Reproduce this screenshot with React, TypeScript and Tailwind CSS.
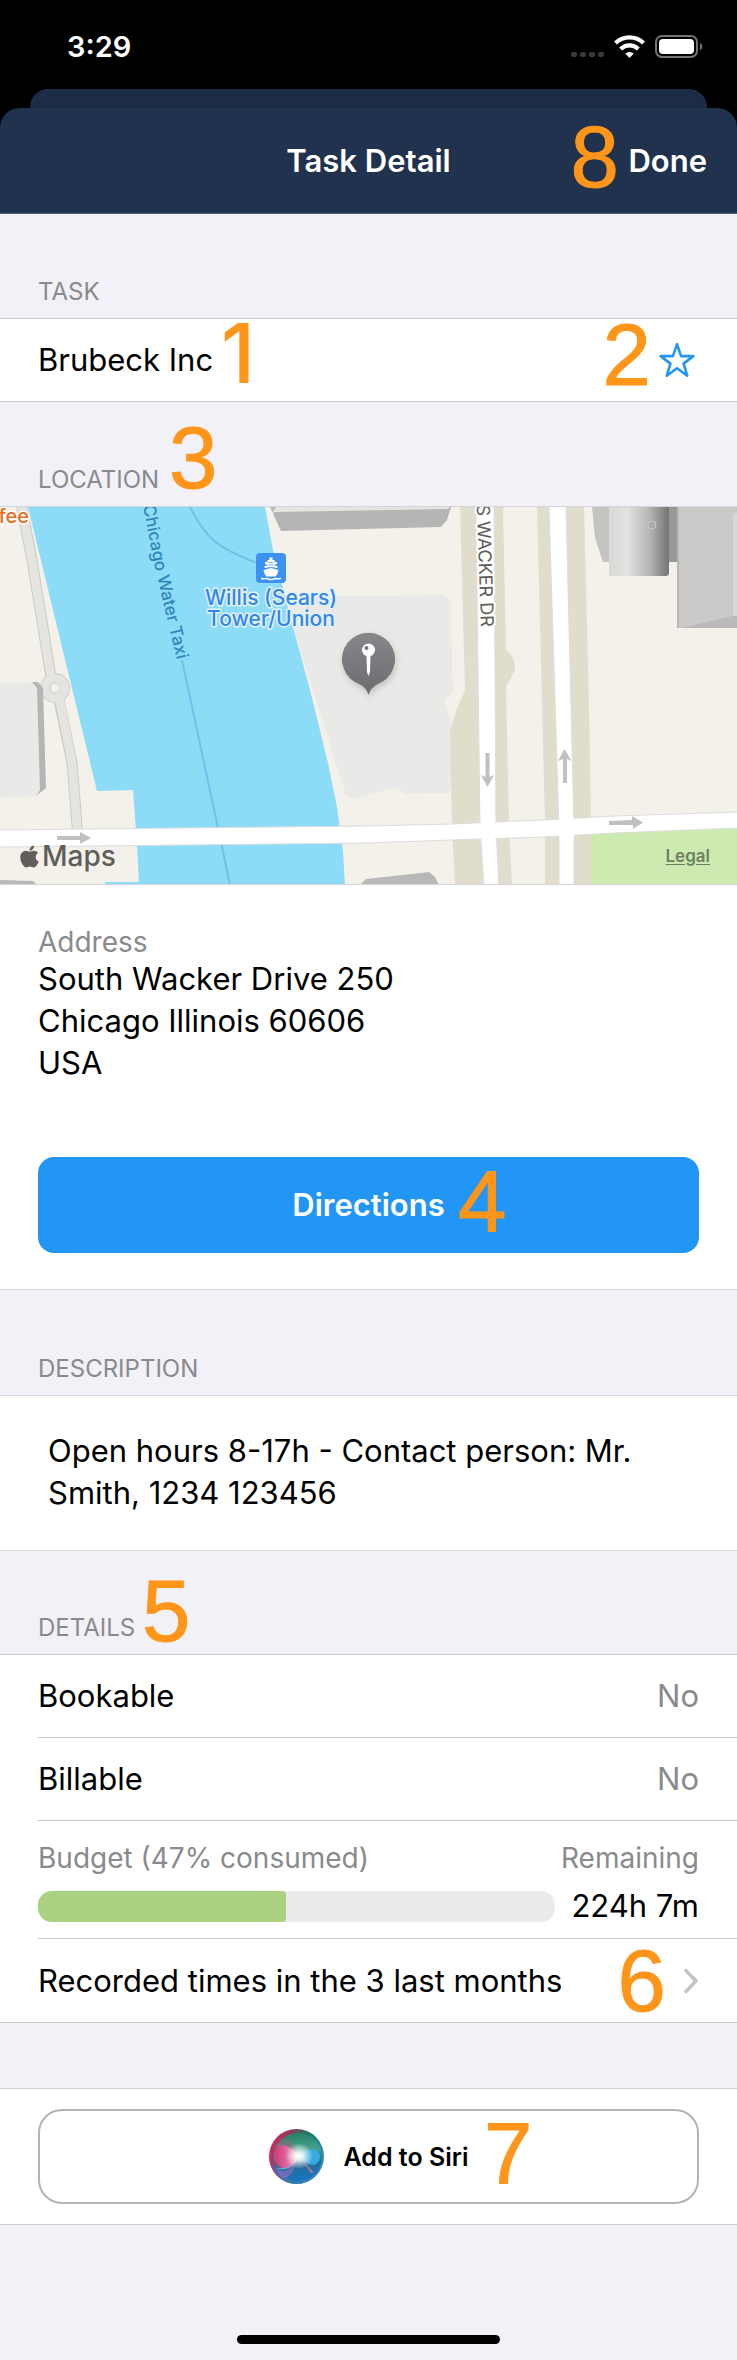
import type { ReactNode } from 'react'
import { FaApple } from 'react-icons/fa'

const rows = [
  { label: 'Bookable', value: 'No' },
  { label: 'Billable', value: 'No' },
]

const budget = { consumed: 47, fill: 48, remaining: '224h 7m' }

function Marker({ n, className }: { n: number; className: string }) {
  return (
    <span
      className={`pointer-events-none absolute z-10 leading-none text-[#ff9519] ${
        n === 1
          ? 'text-[82px] font-medium'
          : "font-['Liberation_Sans',Arial,sans-serif] text-[87px] font-normal [-webkit-text-stroke:1px_#ff9519]"
      } ${className}`}
    >
      {n}
    </span>
  )
}

function SectionTitle({ children, className }: { children: ReactNode; className: string }) {
  return (
    <h2 className={`flex items-end px-[38px] pb-[10px] text-2xl leading-8 font-normal text-[#8a8a8e] uppercase ${className}`}>
      {children}
    </h2>
  )
}

function StatusBar() {
  return (
    <div className="flex h-[89px] items-center justify-between pt-1 pr-[34px] pl-[67px]">
      <span className="text-[29px] leading-9 font-semibold text-white">3:29</span>
      <svg width="132" height="24" viewBox="0 0 132 24" fill="none">
        <g fill="#3a3a3a">
          <rect x="0" y="17" width="6" height="5" rx="2" />
          <rect x="9" y="17" width="6" height="5" rx="2" />
          <rect x="18" y="17" width="6" height="5" rx="2" />
          <rect x="27" y="17" width="6" height="5" rx="2" />
        </g>
        <g stroke="#fff" strokeWidth="4.200">
          <path d="M44.500 8a20.500 20.500 0 0 1 28 0" />
          <path d="M49.700 14a12.500 12.500 0 0 1 17.600 0" />
        </g>
        <path d="M54.200 18.600a6.500 6.500 0 0 1 8.600 0L58.500 23z" fill="#fff" />
        <rect x="85" y="1" width="41" height="21" rx="6" stroke="#737373" strokeWidth="2" />
        <rect x="88" y="4" width="35" height="15" rx="4" fill="#fff" />
        <path d="M129 8c3 1 3 6 0 7z" fill="#737373" />
      </svg>
    </div>
  )
}

function CityMap() {
  return (
    <svg viewBox="0 0 737 377" className="block h-auto w-full bg-[#f4f1ea]">
      <defs>
        <linearGradient id="tower">
          <stop offset="0" stopColor="#d8d8d6" />
          <stop offset=".3" stopColor="#e2e2e0" />
          <stop offset=".65" stopColor="#b9b9b8" />
          <stop offset="1" stopColor="#747474" />
        </linearGradient>
        <linearGradient id="pin" x2="0" y2="1">
          <stop offset="0" stopColor="#87868b" />
          <stop offset="1" stopColor="#6c6b70" />
        </linearGradient>
        <filter id="pinShadow" x="-20%" y="-20%" width="150%" height="150%">
          <feDropShadow dx="1" dy="3" stdDeviation="3" floodOpacity=".18" />
        </filter>
        <path id="taxi" d="M141 -12L154 56L165 103L177 153" />
      </defs>

      {/* river and ferry route */}
      <path d="M28 0L97 284L133 283L136 323L139 375H105V378H345L343 345L337 300L328 256L310 183L293 120L273 43L265 0Z" fill="#8cdcf7" />
      <path d="M182 153L218 321L230 378M190 0C206 32 218 41 257 56" fill="none" stroke="#70c1ea" strokeWidth="2" />

      {/* riverside path */}
      <path d="M21 -4L32 53L51 170M59 193L72 256L78 330" fill="none" stroke="#cbcbc4" strokeWidth="11" />
      <circle cx="55" cy="181" r="15" fill="#cbcbc4" />
      <path d="M21 -4L32 53L51 170M59 190L72 256L78 330" fill="none" stroke="#e4e5e0" strokeWidth="9" />
      <circle cx="55" cy="181" r="14" fill="#e4e5e0" />
      <circle cx="55" cy="181" r="5" fill="#f4f1ea" stroke="#cbcbc4" />

      {/* blocks */}
      <path d="M31 175H38L43 181L46 281L36 289Z" fill="#b5b5b5" />
      <path d="M0 176L32 175L37 181L40 283L36 289L0 291Z" fill="#e9e9e8" />
      <path d="M288 90L444 88L450 93L453 184L444 194L452 218L448 230L451 232L453 280L447 286L404 287L397 280L353 292L346 288L293 120Z" fill="#e9e9e7" />
      <path d="M270 0H451L447 13L441 20L281 24Z" fill="#b5b5b5" />
      <path d="M276 0H450L448 2L276 5L272 6Z" fill="#e4e4e3" />
      <path d="M0 373L33 374L37 378H0Z" fill="#b8b8b8" />
      <path d="M360 378L366 372L429 365L435 370L439 378Z" fill="#b8b8b8" />

      {/* avenues */}
      <g fill="#e1ddcc">
        <path d="M460 0L465 183L457 201L450 223L452 320L455 378H512L509 320L506 180L515 163C516 155 512 147 506 143L503 0Z" />
        <path d="M537 0L545 315V378H591V310L589 200L584 0Z" />
      </g>
      <path d="M591 326L737 319V378H591Z" fill="#cdebb0" />
      <g fill="#fff" stroke="#dcdddc">
        <path d="M476 -2L480 320L484 380H499L496 320L494 -2Z" />
        <path d="M549 -2L559 320V380H574V320L566 -2Z" />
        <path d="M-2 323L367 319L452 317L544 313L614 309L739 305V321L614 326L544 330L480 332L367 336L-2 340Z" />
      </g>
      <path d="M481 314L495 313V336L482 337ZM559.500 309H573.500V333H559.500Z" fill="#fff" />

      {/* one way arrows */}
      <g fill="#c0c0c0">
        <path d="M57 329H80V325L91 331L80 337V333H57Z" />
        <path d="M609 314L632 313V309L643 315.500L633 322V318L609 318Z" />
        <path d="M485.500 246H489.500V270L494 268L487.500 280L481 268L485.500 270Z" />
        <path d="M563 276H567V252L571.500 254L564.500 242L558 254L563 252Z" />
      </g>

      {/* towers */}
      <path d="M592 0H609V55H603L595 31Z" fill="#c3c3c1" />
      <path d="M669 0H681V55H669Z" fill="#989897" />
      <path d="M609 0H669V67L667 69H609Z" fill="url(#tower)" />
      <circle cx="652" cy="18" r="4" fill="#aaa" stroke="#c8c8c8" />
      <path d="M677 0H737V121H677Z" fill="#cbcac8" />
      <path d="M681 121L733 109H737V121Z" fill="#bbbab8" />
      <path d="M733 6H737V109H733Z" fill="#d9d8d6" />
      <path d="M678 0V121" stroke="#b7b6b4" strokeWidth="2" />

      {/* ferry stop */}
      <rect x="256" y="46" width="30" height="30" rx="4" fill="#3c91f1" />
      <g fill="#fff">
        <path d="M269.500 50.500H272.500V53H274.500V55H277V57H275.500V59H277.500V61L271 60L264.500 61V59H266.500V57H265V55H267.500V53H269.500Z" />
        <path d="M263.500 63L271 61L278.500 63C278 66 277 68 275.500 69.500H266.500C265 68 264 66 263.500 63Z" />
        <path d="M261 70.500C263 72 265 70 267 71C269 72 273 72 275 71C277 70 279 72 281 70.500V72C279 73.500 277 71.500 275 72.500C273 73.500 269 73.500 267 72.500C265 71.500 263 73.500 261 72Z" />
      </g>
      <path d="M268.500 55.500H273.500M267.500 58H274.500" stroke="#3c91f1" strokeWidth=".7" />

      {/* location pin */}
      <path d="M368.500 188C366 179 360 178 355 175A26.500 26.500 0 1 1 382 175C376 178 371 180 368.500 188Z" fill="url(#pin)" filter="url(#pinShadow)" />
      <path d="M366.500 147H370.500L370 165L368.500 169L367 165Z" fill="#fff" />
      <circle cx="368.500" cy="143" r="6.500" fill="#fff" />
      <circle cx="366.500" cy="141" r="2" fill="#737277" />

      <g fontFamily="Inter, sans-serif" fontWeight="500" strokeLinejoin="round" style={{ paintOrder: 'stroke' }}>
        <text x="29" y="16" textAnchor="end" fontSize="20" fill="#ed691c" stroke="#fff" strokeWidth="3" style={{ paintOrder: 'stroke' }}>fee</text>
        <g fontSize="21" fill="#3287e8" stroke="#e5f1f8" strokeWidth="3" textAnchor="middle">
          <text x="271" y="98">Willis (Sears)</text>
          <text x="271" y="119">Tower/Union</text>
        </g>
        <text fontSize="17" fill="#2f86b9" stroke="#8cdcf7" strokeWidth="2" textAnchor="end">
          <textPath href="#taxi" startOffset="100%">Chicago Water Taxi</textPath>
        </text>
        <text transform="translate(481 120) rotate(88)" textAnchor="end" fontSize="18" fontWeight="400" fill="#5f5e5a" stroke="#fff" strokeWidth="4">S WACKER DR</text>
      </g>
    </svg>
  )
}

function SiriOrb() {
  return (
    <svg width="55" height="55" viewBox="0 0 55 55">
      <defs>
        <linearGradient id="rim" x1="0" y1=".3" x2="1" y2=".6">
          <stop offset="0" stopColor="#d02c66" />
          <stop offset=".3" stopColor="#8f3a5c" />
          <stop offset=".6" stopColor="#157a62" />
          <stop offset="1" stopColor="#2b8fc9" />
        </linearGradient>
        <linearGradient id="core" x1=".4" y1="0" x2=".55" y2="1">
          <stop offset="0" stopColor="#288166" />
          <stop offset=".4" stopColor="#45a18f" />
          <stop offset=".65" stopColor="#286b91" />
          <stop offset="1" stopColor="#1775c5" />
        </linearGradient>
        <radialGradient id="glow">
          <stop offset="0" stopColor="#fff" />
          <stop offset=".3" stopColor="#fff" stopOpacity=".85" />
          <stop offset="1" stopColor="#fff" stopOpacity="0" />
        </radialGradient>
        <linearGradient id="pink">
          <stop offset="0" stopColor="#e62b79" />
          <stop offset="1" stopColor="#f4a3ca" />
        </linearGradient>
      </defs>
      <circle cx="27.500" cy="27.500" r="27.500" fill="url(#rim)" />
      <path d="M2 34C5 46 15 55 27.500 55C40 55 49 47 53 36C44 48 16 52 2 34Z" fill="#3a7fd0" opacity=".7" />
      <circle cx="29" cy="28" r="24" fill="url(#core)" />
      <path d="M6 20C14 2 26 12 30 27C20 24 12 24 6 33Z" fill="#a4627b" opacity=".45" />
      <path d="M5 34C12 48 22 42 30 27C24 46 18 52 12 48Z" fill="#8b6cc0" opacity=".7" />
      <path d="M6 27C6 12 18 13 30 27C22 45 6 42 6 27Z" fill="url(#pink)" opacity=".9" />
      <path d="M30 27C37 18 50 18 51 28C50 39 37 38 30 27Z" fill="#35b0e8" opacity=".9" />
      <path d="M30 27L45 44L42 44Z" fill="#c77aa4" opacity=".8" />
      <path d="M9 39C18 42 25 36 30 27" fill="none" stroke="#70d4dc" opacity=".8" />
      <ellipse cx="30" cy="27" rx="14" ry="13" fill="url(#glow)" />
    </svg>
  )
}

export default function App() {
  return (
    <div className="min-h-[2360px] bg-[#f2f1f7] font-[Inter,sans-serif] text-[31px] leading-[42px] text-black">
      <div className="bg-black">
        <StatusBar />
        <div className="mx-[30px] h-[19px] rounded-t-[18px] bg-[#1c2c44]" />
        <header className="relative flex h-[106px] items-center justify-center rounded-t-[20px] border-b border-[#52617a] bg-[#21324e] font-semibold text-white">
          <h1>Task Detail</h1>
          <button className="absolute right-[30px]">Done</button>
          <Marker n={8} className="top-[5px] right-[118px]" />
        </header>
      </div>

      <SectionTitle className="h-[104px]">Task</SectionTitle>
      <section className="relative flex h-[84px] items-center justify-between border-y border-[#c8c8cb] bg-white pr-[42px] pl-[38px]">
        <p>Brubeck Inc</p>
        <Marker n={1} className="top-[-6px] left-[221px]" />
        <Marker n={2} className="top-[-8px] right-[86px]" />
        <button aria-label="Favourite">
          <svg width="36" height="36" viewBox="0 0 36 36" fill="none" stroke="#2196f3" strokeWidth="2.600" strokeLinejoin="round">
            <path d="M18 2.300L22.100 14.100H34.300L24.600 21.600L28.200 33.700L18 26.300L7.800 33.700L11.400 21.600L1.700 14.100H13.900Z" />
          </svg>
        </button>
      </section>

      <div className="relative">
        <SectionTitle className="h-[104px]">Location</SectionTitle>
        <Marker n={3} className="top-[12px] left-[169px]" />
      </div>
      <section className="border-y border-[#d5d5da] bg-white">
        <div className="relative">
          <CityMap />
          <div className="absolute bottom-[10px] left-[17px] flex items-center text-[28px] leading-9 font-medium text-[#5f5e5a]">
            <FaApple size={25} />
            <span>Maps</span>
          </div>
          <a href="#legal" className="absolute right-[27px] bottom-[16px] text-[17px] leading-6 font-semibold text-[#6f805f] underline underline-offset-2">
            Legal
          </a>
        </div>
        <div className="border-t border-[#d5d5da] px-[38px] pt-[41px] pb-9">
          <p className="text-[28px] leading-8 text-[#8a8a8e]">Address</p>
          <address className="not-italic">
            South Wacker Drive 250
            <br />
            Chicago Illinois 60606
            <br />
            USA
          </address>
          <button className="relative mt-[73px] h-24 w-full rounded-2xl bg-[#2296f4] font-semibold text-white">
            Directions
            <Marker n={4} className="top-[1px] left-[420px]" />
          </button>
        </div>
      </section>

      <SectionTitle className="h-[105px]">Description</SectionTitle>
      <section className="border-y border-[#dadade] bg-white px-12 pt-[34px] pb-9">
        <p>Open hours 8-17h - Contact person: Mr. Smith, 1234 123456</p>
      </section>

      <div className="relative">
        <SectionTitle className="h-[103px]">Details</SectionTitle>
        <Marker n={5} className="top-[16px] left-[142px]" />
      </div>
      <section className="border-y border-[#c8c8cb] bg-white pl-[38px]">
        {rows.map((row) => (
          <div key={row.label} className="flex h-[83px] items-center justify-between border-b border-[#c8c8cb] pr-[38px]">
            <span>{row.label}</span>
            <span className="text-[#8a8a8e]">{row.value}</span>
          </div>
        ))}
        <div className="h-[118px] border-b border-[#c8c8cb] pt-4 pr-[38px]">
          <div className="flex justify-between text-[28px] text-[#8a8a8e]">
            <span>Budget ({budget.consumed}% consumed)</span>
            <span>Remaining</span>
          </div>
          <div className="flex items-center gap-4 pt-[6px]">
            <div className="h-[31px] flex-1 overflow-hidden rounded-[14px] bg-[#ebebeb]">
              <div className="h-full rounded-r-sm bg-[#aad17f]" style={{ width: `${budget.fill}%` }} />
            </div>
            <span>{budget.remaining}</span>
          </div>
        </div>
        <button className="relative flex h-[83px] w-full items-center justify-between pr-[38px] text-left">
          <span>Recorded times in the 3 last months</span>
          <Marker n={6} className="top-[-2px] right-[71px]" />
          <svg width="16" height="26" viewBox="0 0 16 26" fill="none" stroke="#c4c4c7" strokeWidth="3.500" strokeLinecap="round" strokeLinejoin="round">
            <path d="M3 2.500L13 13L3 23.500" />
          </svg>
        </button>
      </section>

      <section className="mt-[65px] border-y border-[#d0d0d3] bg-white px-[38px] py-5">
        <button className="relative flex h-[95px] w-full items-center justify-center gap-5 rounded-3xl border-2 border-[#b3b3b5] text-[25px] font-semibold">
          <SiriOrb />
          Add to Siri
          <Marker n={7} className="top-[-1px] left-[444px]" />
        </button>
      </section>

      <div className="mx-auto mt-[110px] h-[9px] w-[263px] rounded-full bg-black" />
    </div>
  )
}
